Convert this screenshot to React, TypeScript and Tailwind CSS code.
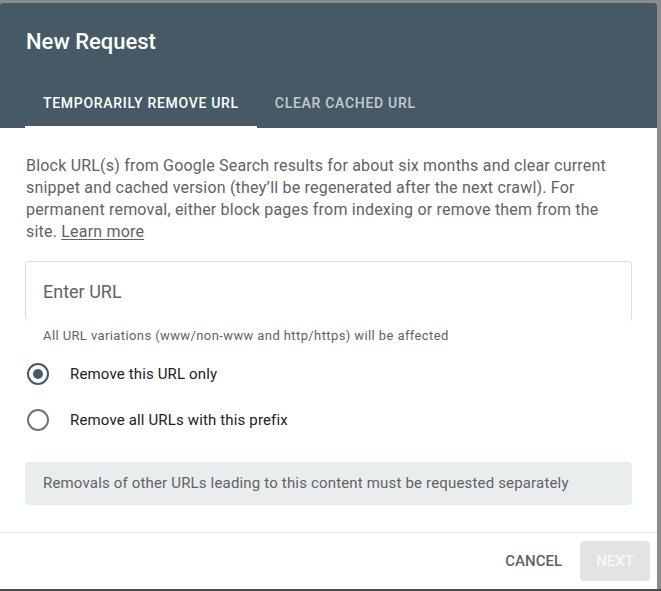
import React, { useState } from "react";

export default function App() {
  const [mode, setMode] = useState<"only" | "prefix">("only");
  const [tab, setTab] = useState(0);

  const radios: [typeof mode, string][] = [
    ["only", "Remove this URL only"],
    ["prefix", "Remove all URLs with this prefix"],
  ];

  return (
    <div
      className="w-[661px] h-[591px] bg-[#8c8c8c] pt-[3px] overflow-hidden"
      style={{ fontFamily: "Roboto, 'Noto Sans', sans-serif" }}
    >
      <div className="w-[657px] h-[586px] bg-white flex flex-col rounded-t-[2px] overflow-hidden">
        {/* header */}
        <div className="bg-[#455a64] pt-[25px] flex flex-col">
          <h1 className="pl-[26px] text-white text-[22px] leading-[28px] font-medium">
            New Request
          </h1>
          <div className="flex mt-6 pl-[25px]">
            {["Temporarily remove URL", "Clear cached URL"].map((label, i) => (
              <button
                key={label}
                onClick={() => setTab(i)}
                className={`h-12 px-[18px] uppercase text-[14px] font-medium tracking-[0.7px] border-b-2 ${
                  tab === i
                    ? "text-white border-white"
                    : "text-white/70 border-transparent"
                }`}
              >
                {label}
              </button>
            ))}
          </div>
        </div>

        {/* body */}
        <div className="px-[25px] pt-[27px] flex flex-col">
          <p className="pl-px text-[16px] leading-[22px] tracking-[0.2px] text-[#5f6368]">
            Block URL(s) from Google Search results for about six months and
            clear current snippet and cached version (they’ll be regenerated
            after the next crawl). For permanent removal, either block pages
            from indexing or remove them from the site.{" "}
            <a href="#" className="underline underline-offset-2">
              Learn more
            </a>
          </p>

          <div className="mt-[18px] h-[60px] border border-b-0 border-[#dadce0] rounded-[4px] flex items-center px-[17px]">
            <input
              placeholder="Enter URL"
              className="w-full outline-none text-[18px] text-[#202124] placeholder:text-[#5f6368]"
            />
          </div>
          <div className="mt-[7px] pl-[18px] text-[13px] leading-4 tracking-[0.4px] text-[#5f6368]">
            All URL variations (www/non-www and http/https) will be affected
          </div>

          <div className="mt-[7px] flex flex-col">
            {radios.map(([value, label]) => (
              <label
                key={value}
                onClick={() => setMode(value)}
                className="h-[46px] flex items-center cursor-pointer"
              >
                <span
                  className={`ml-[2px] w-[22px] h-[22px] rounded-full border-2 flex items-center justify-center ${
                    mode === value ? "border-[#455a64]" : "border-[#757575]"
                  }`}
                >
                  {mode === value && (
                    <span className="w-[10px] h-[10px] rounded-full bg-[#455a64]" />
                  )}
                </span>
                <span className="ml-[21px] text-[15px] tracking-[0.15px] text-[#202124]">
                  {label}
                </span>
              </label>
            ))}
          </div>

          <div className="mt-[19px] h-[43px] bg-[#eaedee] rounded-[4px] flex items-center px-[18px] text-[15px] tracking-[0.17px] text-[#5f6368]">
            Removals of other URLs leading to this content must be requested
            separately
          </div>
        </div>

        {/* footer */}
        <div className="mt-[27px] border-t border-[#e0e0e0] flex-1 flex items-center justify-end gap-[18px] pr-[7px]">
          <button className="text-[15px] font-medium text-[#5f6368] uppercase">
            Cancel
          </button>
          <button
            disabled
            className="w-[70px] h-10 rounded-[4px] bg-[#e3e3e3] text-[15px] font-medium text-[#f8f8f8] uppercase"
          >
            Next
          </button>
        </div>
      </div>
      <div className="h-[2px] bg-[#4a4a4a]" />
    </div>
  );
}
